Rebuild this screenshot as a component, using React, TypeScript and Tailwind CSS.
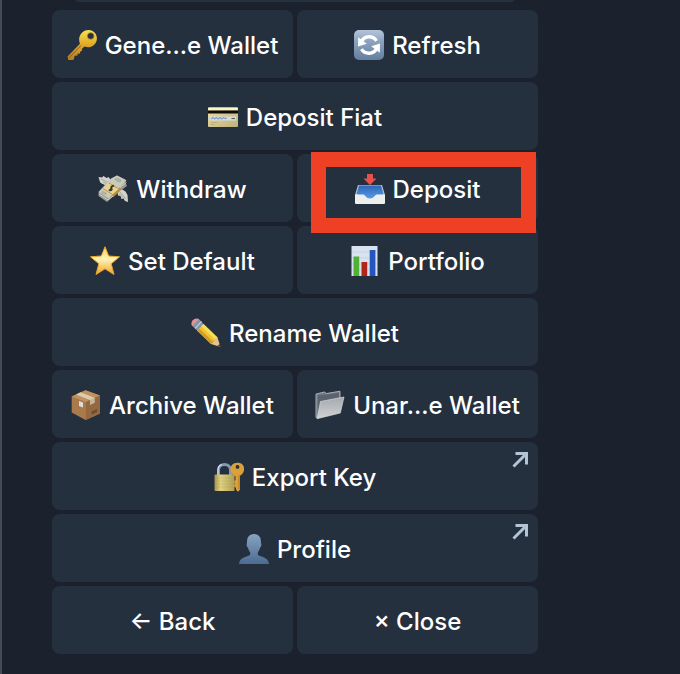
import type { ReactNode } from "react";

const KeyIcon = () => (
  <>
    <defs>
      <linearGradient id="key" x1="0" y1="0" x2="0" y2="1">
        <stop offset="0" stopColor="#f8df55" />
        <stop offset="0.5" stopColor="#dfa928" />
        <stop offset="1" stopColor="#b97a26" />
      </linearGradient>
    </defs>
    <path
      fill="url(#key)"
      fillRule="evenodd"
      d="M15.500 2.200C19-.8 25-.8 28 3s2.400 9-1 12c-3 2.600-6.500 2.800-9.500 1.600L14.800 19l.4 1.500-2 1.300-.3 1.900-2.200-.2-.4 2.300-2-.2-1 1.200-.3 2.500-1.500.7H1.200L.6 26.500 13 13.800c-1.700-4-1-8.600 2.500-11.600ZM23.700 3a3 3 0 1 0 0 6 3 3 0 0 0 0-6Z"
    />
    <path d="M14 15.500 2 27.800" stroke="#8f5c18" strokeWidth="1" />
    <circle cx="23.700" cy="6" r="3.300" fill="none" stroke="#9c6b12" strokeWidth="0.800" />
  </>
);

const RefreshIcon = () => (
  <>
    <defs>
      <linearGradient id="refresh" x1="0" y1="0" x2="0" y2="1">
        <stop offset="0" stopColor="#b4c5d9" />
        <stop offset="0.350" stopColor="#8ea5c0" />
        <stop offset="1" stopColor="#647e9e" />
      </linearGradient>
    </defs>
    <rect width="30" height="30" rx="5" fill="url(#refresh)" />
    <path
      d="M7.500 11.500C10.500 5.200 19 5.200 22.500 10.800M22.500 18.500c-3 6.300-11.500 6.300-15 .7"
      fill="none"
      stroke="#fff"
      strokeWidth="3.400"
    />
    <path d="M4.200 7.200 4 16.500l8.800-2.700zM25.800 22.800l.2-9.300-8.800 2.700z" fill="#fff" />
  </>
);

const CardIcon = () => (
  <>
    <defs>
      <linearGradient id="card" x1="0" y1="0" x2="1" y2="1">
        <stop offset="0" stopColor="#eae0ac" />
        <stop offset="1" stopColor="#bfb17a" />
      </linearGradient>
    </defs>
    <rect y="5.500" width="30" height="19.500" rx="1" fill="url(#card)" />
    <rect y="5.500" width="30" height="2.500" rx="1" fill="#fbf4cb" />
    <rect y="8.500" width="30" height="3" fill="#0c0b08" />
    <rect x="2" y="14.500" width="26" height="4" fill="#dadcdc" />
    <path d="m3 17 2-1.500 1.500 1.500 2-1.500 1.500 1.500 2-1.500 1.500 1.500 2-1.500 1.500 1 2-.5" fill="none" stroke="#7f9ed0" strokeWidth="1.200" />
    <path d="M23.500 16.500H27" stroke="#555d72" strokeWidth="1.200" />
    <path d="M2.500 20.500h7M2.500 22.500h4" stroke="#b0a573" strokeWidth="0.700" />
  </>
);

const MoneyIcon = () => (
  <>
    <path d="M14 12C9 12 4 10.500 2 8L.5 3l3.500.5L5.500 2l3 2L10.500 3l3 4Z" fill="#d3d3ca" />
    <path d="m19 15 5 .3 3.500 2.200 2 3.500.5 7-3-1-1.500-2.500-2 .5-1-3-2.500-.5Z" fill="#d3d3ca" />
    <path d="m3 5 8 4M5 8l6 2.500M22 18l6 7M21 19.500l5 5" stroke="#9b9c92" strokeWidth="0.800" />
    <path d="m13 5 6-3.500 8.500 4v3L29 12l-12.500 9L9 28l-8.500-6v-3.500Z" fill="#96988c" />
    <path d="m13 4.500 6-3 9.500 5-18 18L.5 18Z" fill="#c9cbbd" />
    <path d="m11 9 10 6-6.500 5.500-9.500-6Z" fill="#e9d48f" />
    <path d="m11 9 10 6M5 14.500l9.500 6" stroke="#cc952a" strokeWidth="1" />
    <path d="M14.500 20.500 21 15l.5 2.500-6.500 6Z" fill="#bd8b31" />
    <path d="M16 12.500c-2-1.500-4 .3-2.500 1.700s-.5 3.300-2.800 1.500M15.500 10.800l-4.300 6" fill="none" stroke="#38372f" strokeWidth="1.300" />
    <ellipse cx="20" cy="6" rx="3.500" ry="1.800" fill="#adb09f" transform="rotate(25 20 6)" />
    <ellipse cx="6" cy="19" rx="3" ry="1.500" fill="#adb09f" transform="rotate(25 6 19)" />
    <path d="m1 20 9 6 5-4M22 13.500l6.500-5" fill="none" stroke="#ecece2" strokeWidth="0.700" />
  </>
);

const StarIcon = () => (
  <>
    <defs>
      <linearGradient id="star" x1="0" y1="0" x2="0" y2="1">
        <stop offset="0" stopColor="#ffd35e" />
        <stop offset="0.450" stopColor="#fff3b8" />
        <stop offset="1" stopColor="#f2a325" />
      </linearGradient>
    </defs>
    <path
      d="m15 .8 3.700 9.200 10.800.8-8.300 7 2.800 10.700-9-5.700-9 5.700 2.800-10.700-8.300-7 10.800-.8Z"
      fill="url(#star)"
      stroke="#e9a52a"
      strokeWidth="1"
      strokeLinejoin="round"
    />
  </>
);

const InboxIcon = () => (
  <>
    <defs>
      <linearGradient id="tray" x1="0" y1="0" x2="0" y2="1">
        <stop offset="0" stopColor="#2e64b4" />
        <stop offset="1" stopColor="#5ba0ea" />
      </linearGradient>
    </defs>
    <path d="M3 11h24l3 10v3H0v-3Z" fill="#b9c6d6" />
    <path d="M4 11.500h22l2.500 8.500-9 5.500h-9L1.500 20Z" fill="url(#tray)" />
    <path d="M0 20.500h8.500c1.500 0 2.500 4 6.500 4s5-4 6.500-4H30V29q0 1-1 1H1q-1 0-1-1Z" fill="#eeeeed" />
    <path d="M12 0h6v4.500h3.500L15 11 8.500 4.500H12Z" fill="#e8504a" />
  </>
);

const ChartIcon = () => (
  <>
    <rect x="1.500" width="26" height="30" fill="#d9e2f0" />
    <path d="M2 6h25M2 12h25M2 18h25M2 24h25" stroke="#bfcbdc" strokeWidth="0.700" />
    <rect x="3.500" y="10.500" width="5.700" height="19.500" fill="#51b135" />
    <rect x="11.500" y="16" width="5.700" height="14" fill="#b1251c" />
    <rect x="19.700" y="4" width="5.700" height="26" fill="#2456bd" />
  </>
);

const PencilIcon = () => (
  <>
    <path d="M1.500 2.500Q4-.5 7.500.8l4 4.200-6 6L.8 7.500Q-.3 5 1.500 2.500Z" fill="#e8908f" />
    <path d="m7.700 1.500 5.300 5-6.500 6.500-5-5Z" fill="#7f95ad" />
    <path d="m10.500 3.500-6.500 7" stroke="#b7c8d8" strokeWidth="1.200" />
    <path d="M12.500 6 26.500 19.500l-6.500 6.500L6 12.500Z" fill="#efc42e" />
    <path d="M12.500 6 26.500 19.500l-2.200 2.200L10.300 8.200Z" fill="#f9dd58" />
    <path d="m8.200 10.500 14 13.300-2.200 2.200L6 12.500Z" fill="#d49b1c" />
    <path d="m26.500 19.500 3 9.500-9.500-3q1-1.500 2.200-2 .3-2 2-2.300.7-1.700 2.300-2.200Z" fill="#e5c28c" />
    <path d="m28.500 26 1 3-3-1Z" fill="#39352e" />
  </>
);

const BoxIcon = () => (
  <>
    <path d="M14.500.3 29 5.500v18L14.500 30 .7 22.500V6.500Z" fill="#a97a4c" />
    <path d="M14.500.3 29 5.500 14.800 12 .7 6.500Z" fill="#c0925f" />
    <path d="M14.800 12 29 5.500v18L14.800 30Z" fill="#946840" />
    <path d="m9.500 2.300 14 5.500v5l-4.500 2V10L5 4.500Z" fill="#dccbac" />
    <path d="M19 10v4.700l4.500-2V8Z" fill="#c6b496" />
    <path d="m8 11 4 1.500v5L8 16Z" fill="#dddcda" />
    <path d="m20.500 21.500 5.500-2.500v3l-5.500 2.500Z" fill="#6d4a2d" />
  </>
);

const FolderIcon = () => (
  <>
    <defs>
      <linearGradient id="folder" x1="0" y1="0" x2="0" y2="1">
        <stop offset="0" stopColor="#a5a9ae" />
        <stop offset="1" stopColor="#d0d1d3" />
      </linearGradient>
    </defs>
    <path d="m1 4 8.500-2 2 1.500L25 1.200V8L3 28l-2-.5Z" fill="#6f7983" stroke="#b0b7be" strokeWidth="0.900" />
    <path d="M3 5.500 24 3v5L3 22Z" fill="#59646f" />
    <path d="m5.500 11.500 23.500-4.500-3.700 16L2 28.700Z" fill="url(#folder)" stroke="#d6d8da" strokeWidth="0.700" />
  </>
);

const LockKeyIcon = () => (
  <>
    <defs>
      <linearGradient id="lock" x1="0" y1="0" x2="1" y2="0">
        <stop offset="0" stopColor="#a5944c" />
        <stop offset="0.300" stopColor="#e0d383" />
        <stop offset="1" stopColor="#b3a052" />
      </linearGradient>
    </defs>
    <path d="M4.500 14V8c0-7.500 12-7.500 12 0v6" fill="none" stroke="#8298b4" strokeWidth="3" />
    <path d="M4 13V8c0-3 2-5 4-5.500" fill="none" stroke="#d8e1ec" strokeWidth="1.200" />
    <rect x="0.500" y="12.500" width="20" height="16.500" rx="1" fill="url(#lock)" />
    <path d="M1 16h19M1 19h19M1 22h19M1 25h19" stroke="#8d7d38" strokeOpacity="0.250" strokeWidth="0.700" />
    <path
      fill="#dca038"
      fillRule="evenodd"
      d="M23.500.8c9 0 7.500 10.500 3 12.500l-.5 1v13.500l-2 2-2-2v-2l-1.800-1v-2l1-.8-1-1v-2l1.300-1V14.300c-7-2.500-7-13.500 2-13.500Zm0 2.200a1.900 1.900 0 1 0 0 3.800 1.900 1.900 0 0 0 0-3.800Z"
    />
    <path d="M25 13v14.500" stroke="#b0741b" strokeWidth="0.900" />
  </>
);

const PersonIcon = () => (
  <>
    <defs>
      <linearGradient id="person" x1="0" y1="0" x2="0" y2="1">
        <stop offset="0" stopColor="#86a3c1" />
        <stop offset="1" stopColor="#4c6b92" />
      </linearGradient>
    </defs>
    <path
      d="M15 0c5.500 0 7.200 4 7 9 .8.800.3 4-.9 4.500-.5 2-1.300 3.800-2.300 4.800v2.200c1 2.500 10.700 1.500 11.200 9.500H0c.5-8 10.200-7 11.200-9.500v-2.200c-1-1-1.800-2.800-2.300-4.800C7.700 13 7.200 9.800 8 9c-.2-5 1.500-9 7-9Z"
      fill="url(#person)"
    />
  </>
);

type Item = {
  label: string;
  icon?: ReactNode;
  href?: string;
  highlighted?: boolean;
};

const rows: Item[][] = [
  [
    { label: "Gene...e Wallet", icon: <KeyIcon /> },
    { label: "Refresh", icon: <RefreshIcon /> },
  ],
  [{ label: "Deposit Fiat", icon: <CardIcon /> }],
  [
    { label: "Withdraw", icon: <MoneyIcon /> },
    { label: "Deposit", icon: <InboxIcon />, highlighted: true },
  ],
  [
    { label: "Set Default", icon: <StarIcon /> },
    { label: "Portfolio", icon: <ChartIcon /> },
  ],
  [{ label: "Rename Wallet", icon: <PencilIcon /> }],
  [
    { label: "Archive Wallet", icon: <BoxIcon /> },
    { label: "Unar...e Wallet", icon: <FolderIcon /> },
  ],
  [{ label: "Export Key", icon: <LockKeyIcon />, href: "#export-key" }],
  [{ label: "Profile", icon: <PersonIcon />, href: "#profile" }],
  [{ label: "← Back" }, { label: "× Close" }],
];

const itemClass =
  "relative flex flex-1 items-center justify-center gap-2 rounded-lg bg-[#25303e] pt-5 pb-4 text-2xl font-medium whitespace-nowrap text-white";

function KeyboardItem({ label, icon, href, highlighted }: Item) {
  const content = (
    <>
      {icon && (
        <svg viewBox="0 0 30 30" className="mb-0.5 size-[30px] shrink-0" aria-hidden="true">
          {icon}
        </svg>
      )}
      <span>{label}</span>
    </>
  );

  if (href) {
    return (
      <a href={href} className={itemClass}>
        {content}
        <svg
          viewBox="0 0 16 16"
          className="absolute top-2.5 right-2.5 size-4"
          fill="none"
          stroke="#b3c5d5"
          strokeWidth="3"
          aria-hidden="true"
        >
          <path d="M3.500 1.500h11V12.500M14 2 1.500 14.500" />
        </svg>
      </a>
    );
  }

  return (
    <button type="button" className={itemClass}>
      {content}
      {highlighted && (
        <span className="pointer-events-none absolute -top-0.5 right-0.5 -bottom-[11px] left-3.5 z-10 border-[15px] border-[#ed4025]" />
      )}
    </button>
  );
}

export default function App() {
  return (
    <main className="min-h-screen border-l-2 border-[#454c55] bg-[#1b222d] pr-[142px] pb-5 pl-[50px] font-['Inter',sans-serif]">
      {/* bottom edge of the message above */}
      <div className="mx-6 h-0.5 rounded-b-sm bg-[#25303e]" />
      <div className="mt-2 flex flex-col gap-1">
        {rows.map((row) => (
          <div key={row[0].label} className="flex min-h-[68px] gap-1">
            {row.map((item) => (
              <KeyboardItem key={item.label} {...item} />
            ))}
          </div>
        ))}
      </div>
    </main>
  );
}
